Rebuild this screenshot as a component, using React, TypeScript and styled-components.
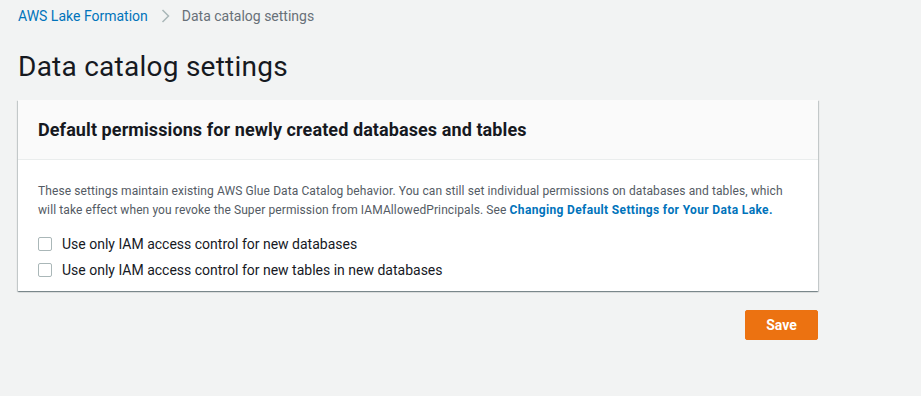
import styled, { createGlobalStyle } from "styled-components";

const GlobalStyle = createGlobalStyle`
  html, body {
    margin: 0;
    padding: 0;
    background: #f2f3f3;
    font-family: Roboto, "Liberation Sans", Arial, sans-serif;
    color: #16191f;
  }
`;

const Page = styled.div`
  padding: 0 18px;
  width: 800px;
  min-height: 396px;
  box-sizing: content-box;
`;

const Breadcrumbs = styled.nav`
  display: flex;
  align-items: center;
  height: 31px;
  font-size: 14px;
  a {
    color: #0073bb;
    text-decoration: none;
  }
  span.current {
    color: #687078;
  }
`;

const Chevron = styled.span`
  display: flex;
  margin: 0 12px 0 13px;
`;

const Title = styled.h1`
  margin: 18px 0 0;
  font-size: 28px;
  font-weight: 400;
  line-height: 36px;
  letter-spacing: 0.25px;
  color: #16191f;
`;

const Panel = styled.section`
  margin-top: 15px;
  background: #fff;
  box-shadow: 0 1px 1px 0 rgba(0, 28, 36, 0.3), 1px 1px 1px 0 rgba(0, 28, 36, 0.15),
    -1px 1px 1px 0 rgba(0, 28, 36, 0.15);
`;

const PanelHeader = styled.header`
  background: #fafafa;
  border-bottom: 1px solid #eaeded;
  height: 59px;
  display: flex;
  align-items: center;
  padding: 0 20px;
  h2 {
    margin: 0;
    font-size: 18px;
    font-weight: 700;
    letter-spacing: 0.09px;
    color: #16191f;
  }
`;

const PanelBody = styled.div`
  padding: 22px 20px 8px;
`;

const Description = styled.p`
  margin: 0 0 11px;
  font-size: 12px;
  line-height: 19px;
  letter-spacing: 0.1px;
  color: #545b64;
  a {
    color: #0073bb;
    font-weight: 700;
    letter-spacing: 0.35px;
    text-decoration: none;
  }
`;

const CheckRow = styled.label`
  display: flex;
  align-items: center;
  height: 26px;
  font-size: 14px;
  color: #16191f;
  cursor: pointer;
`;

const Box = styled.span`
  width: 12px;
  height: 12px;
  border: 1px solid #aab7b8;
  border-radius: 2px;
  background: #fff;
  margin-right: 10px;
`;

const Actions = styled.div`
  display: flex;
  justify-content: flex-end;
  margin-top: 19px;
`;

const PrimaryButton = styled.button`
  background: #ec7211;
  border: 1px solid #ec7211;
  border-radius: 2px;
  color: #fff;
  font-family: inherit;
  font-size: 14px;
  font-weight: 700;
  height: 30px;
  width: 73px;
  cursor: pointer;
`;

const options = [
  "Use only IAM access control for new databases",
  "Use only IAM access control for new tables in new databases",
];

export default function App() {
  return (
    <>
      <GlobalStyle />
      <Page>
        <Breadcrumbs>
          <a href="#">AWS Lake Formation</a>
          <Chevron>
            <svg width="9" height="14" viewBox="0 0 9 14">
              <path d="M1.5 1l6 6-6 6" fill="none" stroke="#aab7b8" strokeWidth="1.5" />
            </svg>
          </Chevron>
          <span className="current">Data catalog settings</span>
        </Breadcrumbs>
        <Title>Data catalog settings</Title>
        <Panel>
          <PanelHeader>
            <h2>Default permissions for newly created databases and tables</h2>
          </PanelHeader>
          <PanelBody>
            <Description>
              These settings maintain existing AWS Glue Data Catalog behavior. You can still set
              individual permissions on databases and tables, which will take effect when you revoke
              the Super permission from IAMAllowedPrincipals. See{" "}
              <a href="#">Changing Default Settings for Your Data Lake.</a>
            </Description>
            {options.map((o) => (
              <CheckRow key={o}>
                <Box />
                {o}
              </CheckRow>
            ))}
          </PanelBody>
        </Panel>
        <Actions>
          <PrimaryButton>Save</PrimaryButton>
        </Actions>
      </Page>
    </>
  );
}
